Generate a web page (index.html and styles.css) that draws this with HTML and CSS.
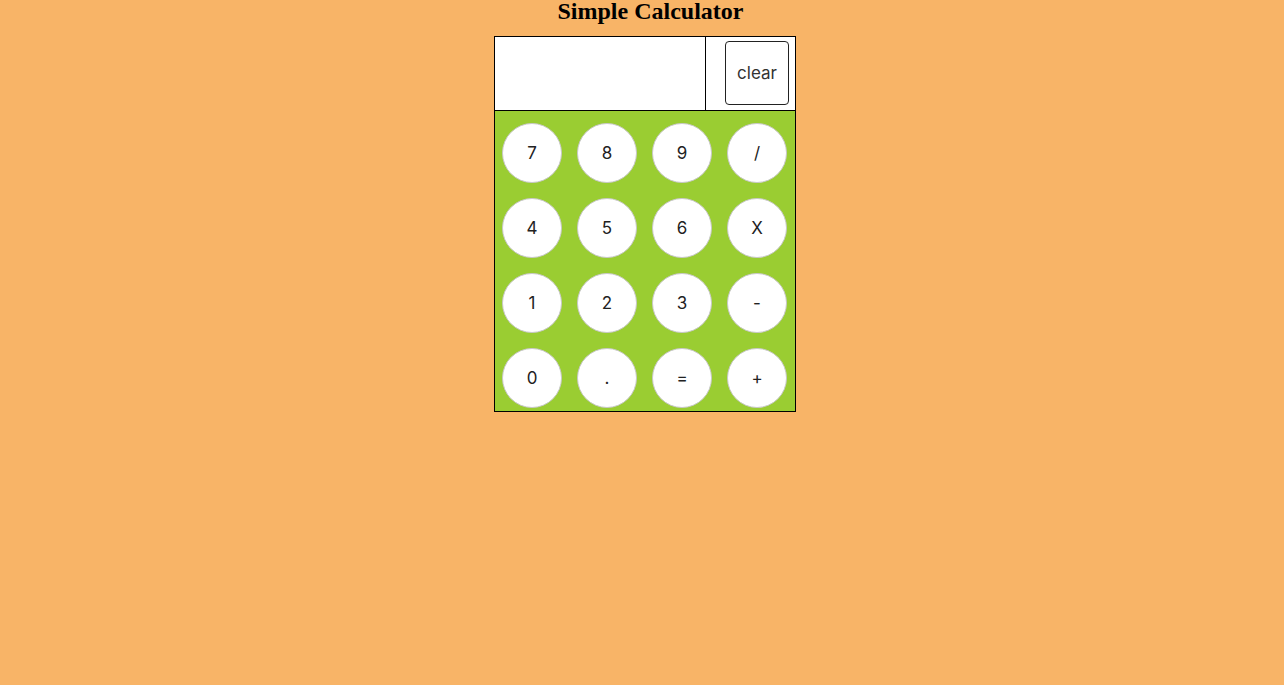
FILE: index.html
```html
<!DOCTYPE html>
<html>
<head>
<meta charset="utf-8">
<title>Simple Calculator</title>
<link rel="stylesheet" href="styles.css">
</head>
<body>
<h1 class="title">Simple Calculator</h1>
<div class="calc">
  <div class="top">
    <div class="display"></div>
    <div class="clear-cell"><button class="clear">clear</button></div>
  </div>
  <div class="keys">
    <button class="key">7</button>
    <button class="key">8</button>
    <button class="key">9</button>
    <button class="key">/</button>
    <button class="key">4</button>
    <button class="key">5</button>
    <button class="key">6</button>
    <button class="key">X</button>
    <button class="key">1</button>
    <button class="key">2</button>
    <button class="key">3</button>
    <button class="key">-</button>
    <button class="key">0</button>
    <button class="key">.</button>
    <button class="key">=</button>
    <button class="key">+</button>
  </div>
</div>
</body>
</html>
```
FILE: styles.css
```css
html, body {
  margin: 0;
  padding: 0;
  background: #f8b467;
}
body {
  font-family: "Liberation Serif", serif;
}
.title {
  margin: 0 0 14px 0;
  padding-left: 17px;
  font-size: 24px;
  line-height: 22px;
  text-align: center;
  font-weight: bold;
  color: #000;
}
.calc {
  width: 300px;
  margin: 0 auto;
  border: 1px solid #000;
  position: relative;
  left: 3px;
}
.top {
  display: flex;
  height: 73px;
  background: #fff;
  border-bottom: 1px solid #000;
}
.display {
  width: 210px;
  border-right: 1px solid #000;
}
.clear-cell {
  flex: 1;
  padding: 4px 0 0 19px;
}
.clear {
  width: 64px;
  height: 64px;
  border: 1px solid #222;
  border-radius: 4px;
  background: #fff;
  font-family: Inter, "Open Sans", sans-serif;
  font-size: 17px;
  color: #333;
  padding: 0;
}
.keys {
  background: #9acd32;
  display: grid;
  grid-template-columns: repeat(4, 60px);
  grid-auto-rows: 60px;
  column-gap: 15px;
  row-gap: 15px;
  padding: 12px 7px 3px 7px;
}
.key {
  width: 60px;
  height: 60px;
  border-radius: 50%;
  border: 1px solid #c8c8c8;
  background: #fff;
  font-family: Inter, "Open Sans", sans-serif;
  font-size: 17px;
  color: #222;
  padding: 0;
}
```
